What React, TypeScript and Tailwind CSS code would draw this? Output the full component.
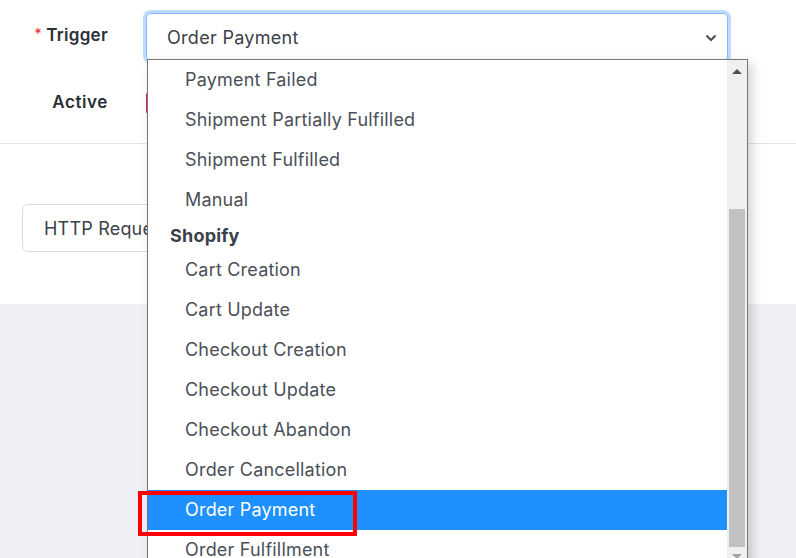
import React from 'react';

const before = ['Payment Failed', 'Shipment Partially Fulfilled', 'Shipment Fulfilled', 'Manual'];
const shopify = [
  'Cart Creation',
  'Cart Update',
  'Checkout Creation',
  'Checkout Update',
  'Checkout Abandon',
  'Order Cancellation',
  'Order Payment',
  'Order Fulfillment',
];

const Option = ({ label, selected }: { label: string; selected?: boolean }) => (
  <div
    className={`relative h-10 flex items-center pl-[37px] pb-[2px] text-[18px] tracking-[0.2px] ${selected ? 'bg-[#1e90ff] text-white' : 'text-[#4b4f58]'}`}
  >
    {label}
    {selected && <div className="absolute left-[-10px] top-[1px] w-[219px] h-[45px] border-4 border-[#ff0000]" />}
  </div>
);

const App: React.FC = () => {
  return (
    <div className="relative w-[796px] h-[558px] overflow-hidden bg-[#eef0f5] font-['Inter',sans-serif]">
      <div className="bg-white">
        <div className="h-[144px] border-b border-[#e4e4e4] pt-[13px]">
          <div className="flex items-center h-[48px]">
            <div className="w-[108px] text-right text-[17px] font-semibold tracking-[0.3px] text-[#2b2f36] pb-[2px]">
              <span className="text-[#f0393b] text-[14px] mr-[4px] relative -top-[2px]">*</span>Trigger
            </div>
            <div className="ml-[38px] w-[582px] h-[48px] rounded-[5px] border border-[#86b7fe] ring-[3px] ring-[#bcdcff] flex items-center justify-between pl-[20px] pr-[8px] text-[18px] tracking-[0.3px] text-[#3c4049]">
              Order Payment
              <svg width="16" height="16" viewBox="0 0 16 16" className="mt-[2px]">
                <path d="M3.5 5.5 L8 10 L12.5 5.5" fill="none" stroke="#4a4e57" strokeWidth="2" />
              </svg>
            </div>
          </div>
          <div className="flex items-center h-[52px] mt-[16px]">
            <div className="w-[108px] text-right text-[17px] font-semibold tracking-[0.6px] text-[#2b2f36]">Active</div>
            <div className="ml-[38px] w-[44px] h-[22px] rounded-[3px] bg-[#e5177b]" />
          </div>
        </div>
        <div className="h-[160px] pt-[60px] pl-[22px]">
          <div className="w-[200px] h-[48px] rounded-[6px] border border-[#d9dce1] flex items-center pl-[21px] text-[18px] tracking-[0.2px] text-[#3c4049]">
            HTTP Request
          </div>
        </div>
      </div>

      <div className="absolute left-[147px] top-[59px] w-[601px] h-[520px] border border-[#767676] bg-white flex shadow-[4px_4px_10px_rgba(0,0,0,0.18)]">
        <div className="flex-1">
          {before.map((l) => (
            <Option key={l} label={l} />
          ))}
          <div className="h-[30px] flex items-center pl-[22px] text-[18px] font-bold tracking-[0.2px] text-[#3c4049]">Shopify</div>
          {shopify.map((l) => (
            <Option key={l} label={l} selected={l === 'Order Payment'} />
          ))}
        </div>
        <div className="w-[20px] bg-[#f0f0f0] relative">
          <svg width="20" height="17" viewBox="0 0 20 17" className="absolute top-0 left-0">
            <path d="M5 14 L10 9 L15 14 Z" fill="#505050" />
          </svg>
          <div className="absolute left-[2px] right-[2px] top-[149px] h-[338px] bg-[#c1c1c1]" />
          <svg width="20" height="17" viewBox="0 0 20 17" className="absolute top-[491px] left-0">
            <path d="M5 3 L10 8 L15 3 Z" fill="#a3a3a3" />
          </svg>
        </div>
      </div>
    </div>
  );
};

export default App;
